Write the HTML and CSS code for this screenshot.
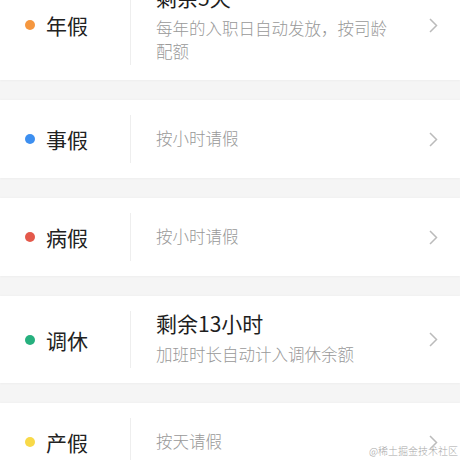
FILE: index.html
```html
<!DOCTYPE html>
<html lang="zh-CN">
<head>
<meta charset="UTF-8" />
<meta name="viewport" content="width=device-width, initial-scale=1" />
<title>请假类型</title>
<link rel="stylesheet" href="styles.css">
</head>
<body>

<div class="leave-list">
  <div class="leave-card">
    <div class="leave-name"><span class="dot orange"></span>年假</div>
    <div class="leave-info">
      <div class="leave-title">剩余5天</div>
      <div class="leave-desc">每年的入职日自动发放，按司龄配额</div>
    </div>
    <svg class="arrow" viewBox="0 0 9 15"><path d="M1 1l6.5 6.5L1 14" /></svg>
  </div>

  <div class="leave-card">
    <div class="leave-name"><span class="dot blue"></span>事假</div>
    <div class="leave-info">
      <div class="leave-desc">按小时请假</div>
    </div>
    <svg class="arrow" viewBox="0 0 9 15"><path d="M1 1l6.5 6.5L1 14" /></svg>
  </div>

  <div class="leave-card">
    <div class="leave-name"><span class="dot red"></span>病假</div>
    <div class="leave-info">
      <div class="leave-desc">按小时请假</div>
    </div>
    <svg class="arrow" viewBox="0 0 9 15"><path d="M1 1l6.5 6.5L1 14" /></svg>
  </div>

  <div class="leave-card">
    <div class="leave-name"><span class="dot green"></span>调休</div>
    <div class="leave-info">
      <div class="leave-title">剩余13小时</div>
      <div class="leave-desc">加班时长自动计入调休余额</div>
    </div>
    <svg class="arrow" viewBox="0 0 9 15"><path d="M1 1l6.5 6.5L1 14" /></svg>
  </div>

  <div class="leave-card">
    <div class="leave-name"><span class="dot yellow"></span>产假</div>
    <div class="leave-info">
      <div class="leave-desc">按天请假</div>
    </div>
    <svg class="arrow" viewBox="0 0 9 15"><path d="M1 1l6.5 6.5L1 14" /></svg>
  </div>
</div>

<div class="watermark">@稀土掘金技术社区</div>

</body>
</html>
```

FILE: styles.css
```css
body {
  font-family: "Noto Sans CJK SC", "Noto Sans", sans-serif;
  background: #f5f5f5;
  margin: 0;
  height: 460px;
  overflow: hidden;
  position: relative;
}
.leave-list {
  display: flex;
  flex-direction: column;
  gap: 20px;
  margin-top: -30px;
}
.leave-card {
  display: flex;
  align-items: stretch;
  background: white;
  padding: 15px 22px 15px 0;
  box-shadow: 0 1px 2px rgba(0,0,0,0.03), 0 -1px 2px rgba(0,0,0,0.02);
}
.leave-name {
  width: 131px;
  flex-shrink: 0;
  box-sizing: border-box;
  padding-left: 25px;
  display: flex;
  align-items: center;
  gap: 11px;
  font-size: 21px;
  color: #222;
  border-right: 1px solid #eeeeee;
}
.dot {
  width: 10px;
  height: 10px;
  border-radius: 50%;
}
.dot.orange { background: #f5973f; }
.dot.blue { background: #3d8ff0; }
.dot.red { background: #e4594b; }
.dot.green { background: #26b07e; }
.dot.yellow { background: #f8d948; }
.leave-info {
  flex: 1;
  box-sizing: border-box;
  min-height: 48px;
  padding: 0 0 2px 25px;
  display: flex;
  flex-direction: column;
  justify-content: center;
  gap: 8px;
}
.leave-title {
  font-size: 21px;
  line-height: 24px;
  color: #1e1e1e;
}
.leave-desc {
  max-width: 236px;
  font-size: 16.5px;
  font-weight: 300;
  line-height: 23px;
  color: #999;
}
.arrow {
  width: 9px;
  height: 15px;
  align-self: center;
  fill: none;
  stroke: #bbbbbb;
  stroke-width: 1.5;
}
.watermark {
  position: absolute;
  right: 2px;
  bottom: 2px;
  font-size: 10px;
  font-weight: 300;
  color: #a8a8a8;
  text-shadow: 0 0 2px white;
}
```
